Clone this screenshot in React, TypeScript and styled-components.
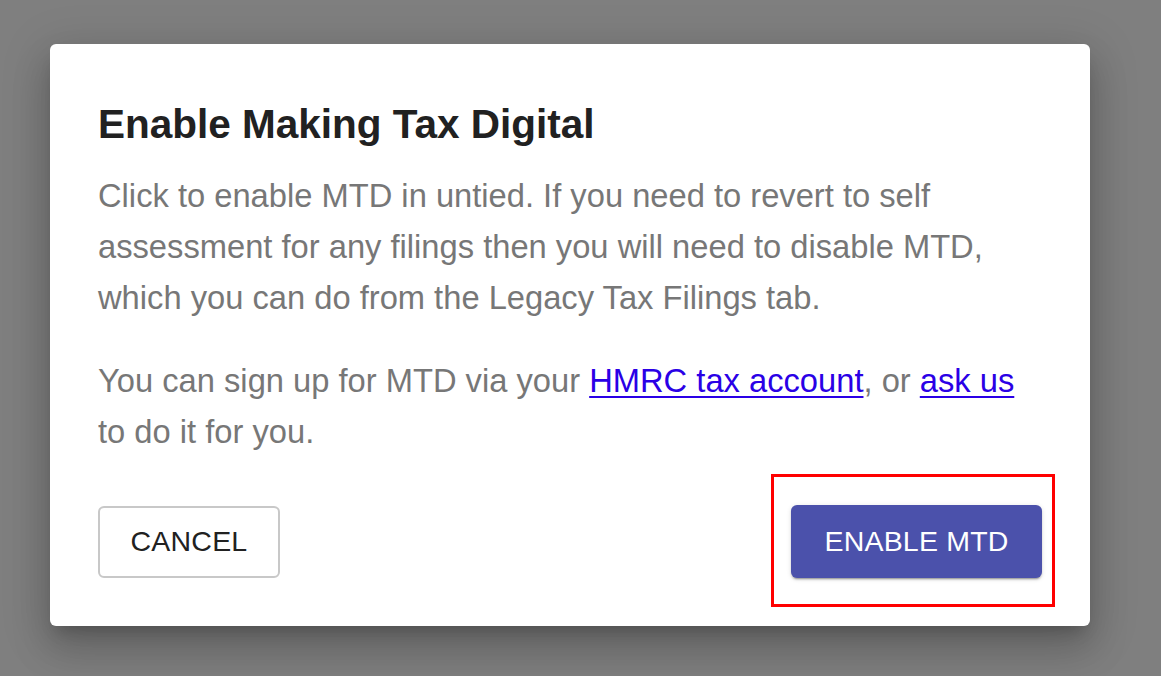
import React from "react";
import styled, { createGlobalStyle } from "styled-components";

const Global = createGlobalStyle`
  html, body { margin: 0; padding: 0; }
  body {
    background: #7f7f7f;
    font-family: "Liberation Sans", Arial, sans-serif;
    width: 1161px;
    height: 676px;
    overflow: hidden;
  }
`;

const Backdrop = styled.div`
  padding: 44px 0 0 50px;
`;

const Dialog = styled.div`
  box-sizing: border-box;
  width: 1040px;
  height: 582px;
  background: #ffffff;
  border-radius: 6px;
  box-shadow: 0 11px 15px -7px rgba(0,0,0,0.2), 0 24px 38px 3px rgba(0,0,0,0.14), 0 9px 46px 8px rgba(0,0,0,0.12);
  padding: 56px 48px 0 48px;
  display: flex;
  flex-direction: column;
`;

const Title = styled.h2`
  margin: 0 0 22px 0;
  font-size: 40.5px;
  font-weight: 700;
  line-height: 48px;
  color: #212121;
`;

const Text = styled.p<{ $last?: boolean }>`
  margin: 0 0 ${(p) => (p.$last ? "0" : "32px")} 0;
  font-size: 32.7px;
  line-height: 51px;
  color: #777777;
`;

const Link = styled.a`
  color: #2a00e6;
  text-decoration: underline;
  text-decoration-thickness: 2px;
  text-underline-offset: 4px;
`;

const Actions = styled.div`
  display: flex;
  justify-content: space-between;
  align-items: center;
  margin-top: 48px;
`;

const Button = styled.button<{ $primary?: boolean }>`
  box-sizing: border-box;
  font-family: "Liberation Sans", Arial, sans-serif;
  font-size: 28.5px;
  letter-spacing: 0.2px;
  text-transform: uppercase;
  border-radius: 6px;
  cursor: pointer;
  padding: 0;
  height: ${(p) => (p.$primary ? "73px" : "72px")};
  width: ${(p) => (p.$primary ? "251px" : "182px")};
  color: ${(p) => (p.$primary ? "#ffffff" : "#212121")};
  background: ${(p) => (p.$primary ? "#4b51ab" : "#ffffff")};
  border: ${(p) => (p.$primary ? "none" : "2px solid #c8c8c8")};
  box-shadow: ${(p) =>
    p.$primary
      ? "0 3px 1px -2px rgba(0,0,0,0.2), 0 2px 2px 0 rgba(0,0,0,0.14), 0 1px 5px 0 rgba(0,0,0,0.12)"
      : "none"};
`;

const HighlightWrap = styled.div`
  position: relative;
  display: flex;
`;

const Highlight = styled.div`
  position: absolute;
  left: -20px;
  right: -13px;
  top: -31px;
  bottom: -29px;
  border: 3px solid #ff0000;
  pointer-events: none;
`;

export default function App() {
  return (
    <>
      <Global />
      <Backdrop>
        <Dialog>
          <Title>Enable Making Tax Digital</Title>
          <Text>
            Click to enable MTD in untied. If you need to revert to self assessment for any filings then you will need to disable MTD, which you can do from the Legacy Tax Filings tab.
          </Text>
          <Text $last>
            You can sign up for MTD via your <Link href="#">HMRC tax account</Link>, or <Link href="#">ask us</Link> to do it for you.
          </Text>
          <Actions>
            <Button>Cancel</Button>
            <HighlightWrap>
              <Button $primary>Enable MTD</Button>
              <Highlight />
            </HighlightWrap>
          </Actions>
        </Dialog>
      </Backdrop>
    </>
  );
}
